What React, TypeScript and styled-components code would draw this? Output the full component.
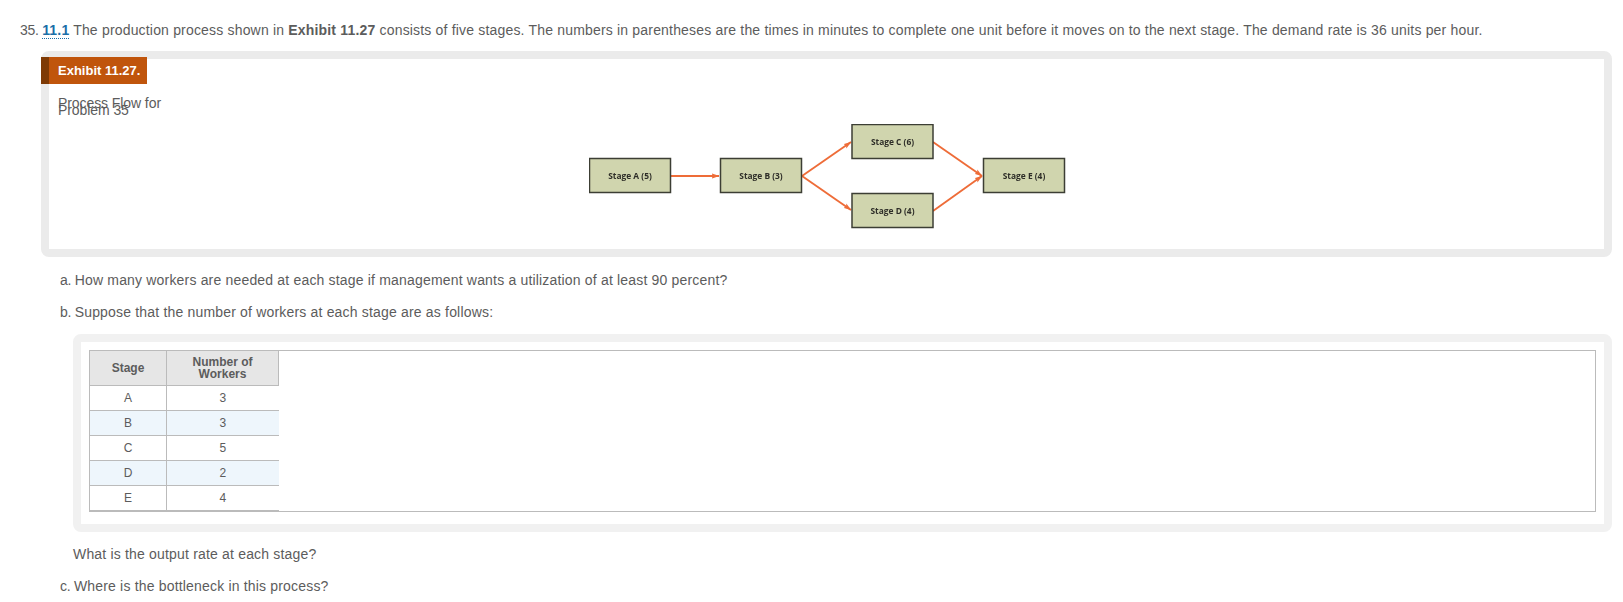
import React from 'react';
import styled, { createGlobalStyle } from 'styled-components';

const GlobalStyle = createGlobalStyle`
  html, body {
    margin: 0;
    padding: 0;
    background: #fff;
  }
  body {
    font-family: "Liberation Sans", Arial, sans-serif;
    font-size: 14px;
    letter-spacing: 0.18px;
    color: #5c5c5c;
  }
`;

const Page = styled.div`
  width: 1623px;
  height: 602px;
  overflow: hidden;
  box-sizing: border-box;
  padding: 22px 11px 0 20px;
`;

const Line = styled.p`
  margin: 0;
  line-height: 16px;
  white-space: nowrap;
`;

// list numbers sit tighter than the running text
const Marker = styled.span`
  letter-spacing: -0.3px;
`;

const Topic = styled.a`
  color: #1a6ea8;
  font-weight: bold;
  border-bottom: 1px dotted #1a6ea8;
`;

const ExhibitFrame = styled.div`
  margin: 13px 0 0 21px;
  border: 8px solid #ebebeb;
  border-radius: 8px;
  height: 190px;
`;

const ExhibitTag = styled.div`
  display: flex;
  align-items: center;
  box-sizing: border-box;
  width: 106px;
  height: 27px;
  margin: -2px 0 0 -8px;
  padding-left: 9px;
  background: #c0550c;
  border-left: 8px solid #7e3a05;
  color: #fff;
  font-size: 13px;
  font-weight: bold;
  letter-spacing: 0;
`;

const Caption = styled.div`
  width: 114px;
  margin: 16px 0 0 9px;
  line-height: 7px;
  letter-spacing: -0.08px;
`;

const Diagram = styled.div`
  display: flex;
  justify-content: center;
  margin-top: 10px;
  padding-left: 2px;

  svg {
    display: block;
    filter: blur(0.5px);
  }

  text {
    font-family: "Open Sans", "Liberation Sans", sans-serif;
    font-size: 8.4px;
    font-weight: 700;
    letter-spacing: 0;
    fill: #2e2e28;
    text-anchor: middle;
  }
`;

const PartLine = styled(Line)<{ $top: number }>`
  margin: ${({ $top }) => $top}px 0 0 40px;
`;

const Answer = styled(Line)<{ $top: number }>`
  margin: ${({ $top }) => $top}px 0 0 53px;
`;

const TableFrame = styled.div`
  margin: 14px 0 0 53px;
  border: 8px solid #f1f1f1;
  border-radius: 8px;
  padding: 8px 8px 12px;
`;

const TableBox = styled.div`
  border: 1px solid #bbb;
  height: 162px;
  box-sizing: border-box;
`;

const DataTable = styled.table`
  border-collapse: collapse;
  table-layout: fixed;
  width: 187px;
  font-size: 12px;
  letter-spacing: 0;
  text-align: center;
`;

const HeadCell = styled.th<{ $w: number }>`
  width: ${({ $w }) => $w}px;
  height: 34px;
  padding: 0;
  background: #e6e6e6;
  border-right: 1px solid #bbb;
  border-bottom: 1px solid #bbb;
  font-weight: bold;
  line-height: 12px;
`;

const Row = styled.tr<{ $alt: boolean }>`
  background: ${({ $alt }) => ($alt ? '#eef6fc' : '#fff')};
`;

const Cell = styled.td`
  height: 24px;
  padding: 0;
  border-bottom: 1px solid #bbb;

  &:first-child {
    border-right: 1px solid #bbb;
  }
`;

const STAGES = [
  { x: 0, y: 34, label: 'Stage A (5)' },
  { x: 131, y: 34, label: 'Stage B (3)' },
  { x: 262.5, y: 0, label: 'Stage C (6)' },
  { x: 262.5, y: 69, label: 'Stage D (4)' },
  { x: 394, y: 34, label: 'Stage E (4)' },
];

const ARROWS = [
  { x1: 82, y1: 52, x2: 130, y2: 52 },
  { x1: 213, y1: 52, x2: 262, y2: 18 },
  { x1: 213, y1: 52, x2: 262, y2: 86 },
  { x1: 344, y1: 18, x2: 393, y2: 52 },
  { x1: 344, y1: 87, x2: 393, y2: 52 },
];

const WORKERS = [
  ['A', '3'],
  ['B', '3'],
  ['C', '5'],
  ['D', '2'],
  ['E', '4'],
];

const ProcessFlow: React.FC = () => (
  <svg width={477} height={106} viewBox="0 0 477 106">
    <defs>
      <marker id="head" markerWidth="8" markerHeight="6" refX="7.5" refY="3" orient="auto" markerUnits="userSpaceOnUse">
        <path d="M0 0.4 L8 3 L0 5.6 L1.6 3 Z" fill="#ee6c38" />
      </marker>
    </defs>
    {ARROWS.map((a, i) => (
      <line key={i} {...a} stroke="#ee6c38" strokeWidth={1.9} markerEnd="url(#head)" />
    ))}
    {STAGES.map((s) => (
      <g key={s.label}>
        <rect x={s.x + 0.5} y={s.y + 0.5} width={81} height={34} fill="#d0d5ae" stroke="#3c3e34" strokeWidth={1.5} />
        <text x={s.x + 41} y={s.y + 20.5}>{s.label}</text>
      </g>
    ))}
  </svg>
);

const App: React.FC = () => (
  <Page>
    <GlobalStyle />
    <Line>
      <Marker>35. </Marker><Topic>11.1</Topic> The production process shown in <b>Exhibit 11.27</b> consists of five stages. The numbers in
      parentheses are the times in minutes to complete one unit before it moves on to the next stage. The demand rate is
      36 units per hour.
    </Line>
    <ExhibitFrame>
      <ExhibitTag>Exhibit 11.27.</ExhibitTag>
      <Caption>Process Flow for Problem 35</Caption>
      <Diagram>
        <ProcessFlow />
      </Diagram>
    </ExhibitFrame>
    <PartLine $top={15}><Marker>a. </Marker>How many workers are needed at each stage if management wants a utilization of at least 90 percent?</PartLine>
    <PartLine $top={16}><Marker>b. </Marker>Suppose that the number of workers at each stage are as follows:</PartLine>
    <TableFrame>
      <TableBox>
        <DataTable>
          <thead>
            <tr>
              <HeadCell $w={76}>Stage</HeadCell>
              <HeadCell $w={111}>Number of<br />Workers</HeadCell>
            </tr>
          </thead>
          <tbody>
            {WORKERS.map(([stage, count], i) => (
              <Row key={stage} $alt={i % 2 === 1}>
                <Cell>{stage}</Cell>
                <Cell>{count}</Cell>
              </Row>
            ))}
          </tbody>
        </DataTable>
      </TableBox>
    </TableFrame>
    <Answer $top={14}>What is the output rate at each stage?</Answer>
    <PartLine $top={16}><Marker>c. </Marker>Where is the bottleneck in this process?</PartLine>
  </Page>
);

export default App;
